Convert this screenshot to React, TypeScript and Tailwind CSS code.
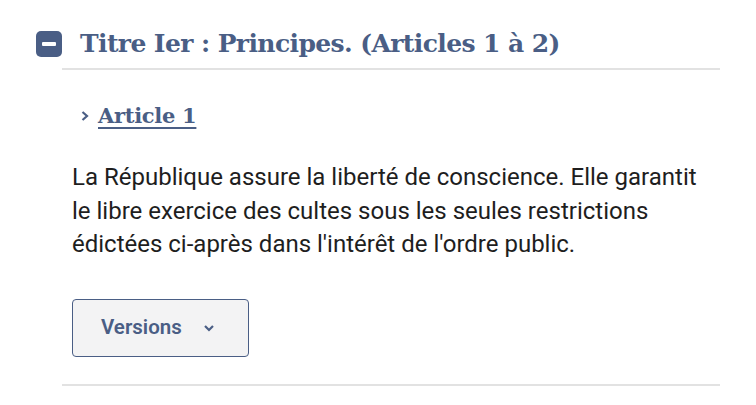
import React from 'react';

const slab = { fontFamily: '"DejaVu Serif", "Liberation Serif", serif' };

const App: React.FC = () => {
  return (
    <div className="w-[756px] h-[405px] bg-white overflow-hidden" style={{ fontFamily: 'Roboto, "Noto Sans", sans-serif' }}>
      <div className="pl-[36px] pr-[36px] pt-[29px]">
        <div className="flex items-center gap-[18px]">
          <span className="w-[26px] h-[26px] rounded-[5px] bg-[#4a5e85] flex items-center justify-center shrink-0">
            <span className="w-[14px] h-[4px] bg-white rounded-[1px]" />
          </span>
          <h2 className="text-[25px] leading-[30px] font-bold text-[#4a5e85] tracking-[-0.6px]" style={slab}>
            Titre Ier : Principes. (Articles 1 à 2)
          </h2>
        </div>
        <div className="ml-[26px] mt-[9px] border-t-2 border-[#e2e2e2]" />
        <div className="ml-[36px]">
          <div className="flex items-center gap-[8px] mt-[32px]">
            <svg width="10" height="12" viewBox="0 0 10 12" className="ml-[8px]">
              <path d="M2.5 2 L7 6 L2.5 10" fill="none" stroke="#4a5e85" strokeWidth="2.2" />
            </svg>
            <a href="#" className="text-[21px] leading-[28px] font-bold text-[#4a5e85] underline decoration-2 underline-offset-[4px] tracking-[-0.3px]" style={slab}>
              Article 1
            </a>
          </div>
          <p className="mt-[31px] text-[24px] leading-[33.5px] text-[#1e1e1e] w-[640px]">
            La République assure la liberté de conscience. Elle garantit le libre exercice des cultes sous les seules restrictions édictées ci-après dans l'intérêt de l'ordre public.
          </p>
          <button className="mt-[37px] w-[177px] h-[58px] rounded-[4px] border border-[#4a5e85] bg-[#f3f3f4] flex items-center pl-[28px] gap-[21px] text-[#4a5e85]">
            <span className="text-[20.5px] font-semibold">Versions</span>
            <svg width="12" height="8" viewBox="0 0 12 8">
              <path d="M2 2 L6 6 L10 2" fill="none" stroke="#4a5e85" strokeWidth="2.2" />
            </svg>
          </button>
        </div>
        <div className="ml-[26px] mt-[27px] border-t-2 border-[#e2e2e2]" />
      </div>
    </div>
  );
};

export default App;
